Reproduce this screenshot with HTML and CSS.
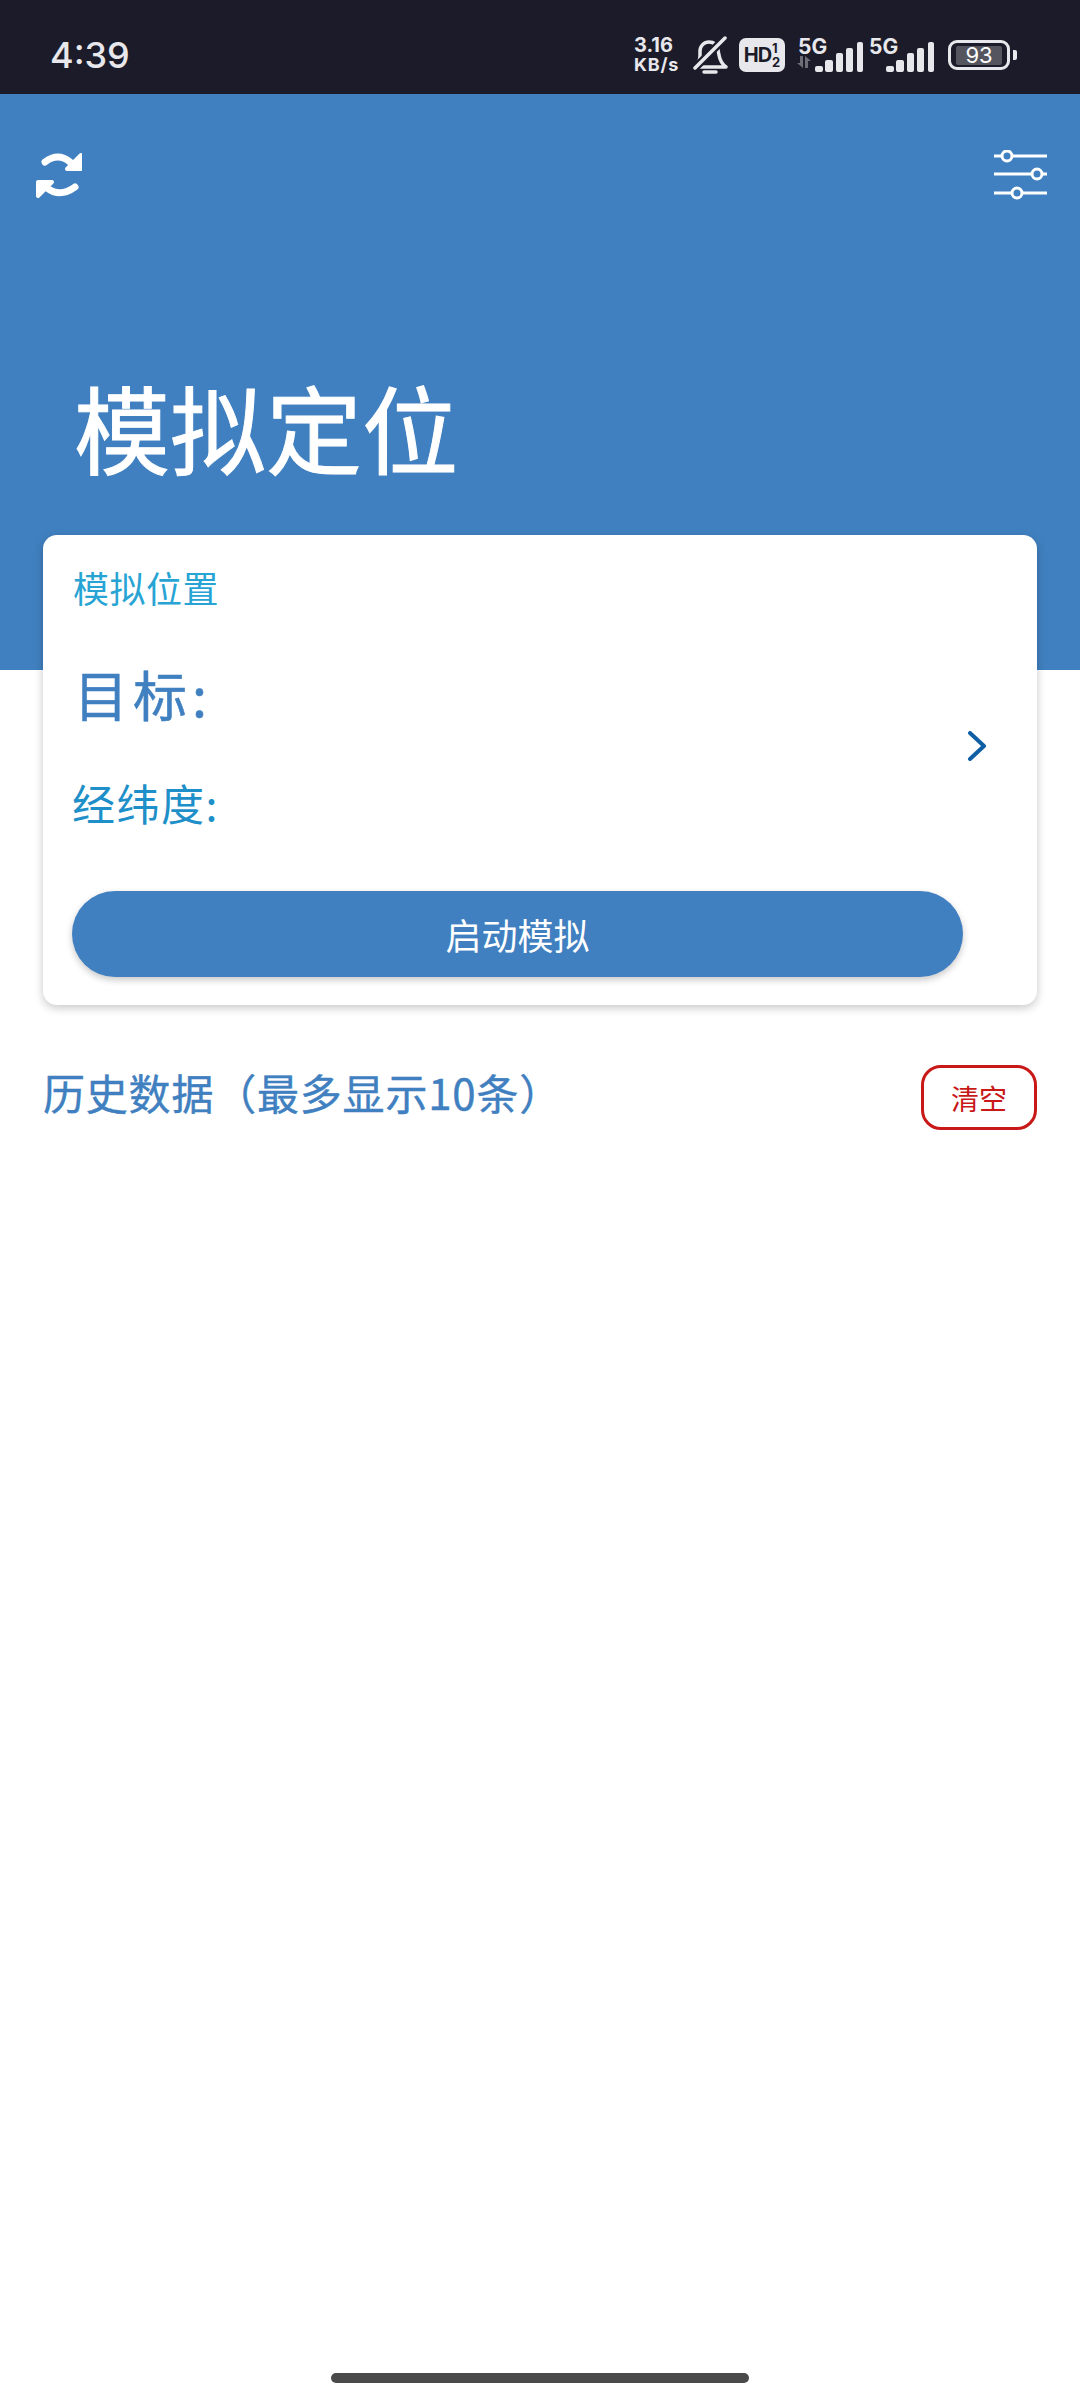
FILE: index.html
```html
<!DOCTYPE html>
<html lang="zh">
<head>
<meta charset="utf-8">
<title>模拟定位</title>
<link rel="stylesheet" href="styles.css">
</head>
<body>
<div class="statusbar">
  <span class="time">4:39</span>
  <div class="status-right">
    <span class="speed"><b>3.16</b><b>KB/s</b></span>
    <svg class="bell" width="36" height="38" viewBox="0 0 36 38" fill="none" stroke="#e8e8ec" stroke-width="3.5" stroke-linecap="round" stroke-linejoin="round">
      <path d="M2 31h32c-4-3-6-6-7-12l-1-5c-1-5-4-8-9-8s-9 4-9 9v5c0 4-2 8-6 11z"/>
      <path d="M33 2L3 32" stroke="#1b1b29" stroke-width="8"/>
      <path d="M33 2L3 32"/>
      <path d="M12 36h12"/>
    </svg>
    <span class="hd"><b class="hd-text">HD</b><span class="hd-sim"><b>1</b><b>2</b></span></span>
    <span class="net net-first">
      <b class="net-label">5G</b>
      <svg class="arrows" width="16" height="12" viewBox="0 0 16 12" fill="#6d6d76"><path d="M4 0h3v12L1 7h3zM9 0l6 5h-3v7H9z"/></svg>
      <svg class="bars" width="48" height="30" viewBox="0 0 48 30" fill="#e8e8ec"><rect x="0" y="24" width="8" height="6" rx="2"/><rect x="10" y="18" width="8" height="12" rx="2"/><rect x="21" y="11" width="7" height="19" rx="2"/><rect x="31" y="6" width="7" height="24" rx="2"/><rect x="42" y="0" width="6" height="30" rx="2"/></svg>
    </span>
    <span class="net">
      <b class="net-label">5G</b>
      <svg class="bars" width="48" height="30" viewBox="0 0 48 30" fill="#e8e8ec"><rect x="0" y="24" width="8" height="6" rx="2"/><rect x="10" y="18" width="8" height="12" rx="2"/><rect x="21" y="11" width="7" height="19" rx="2"/><rect x="31" y="6" width="7" height="24" rx="2"/><rect x="42" y="0" width="6" height="30" rx="2"/></svg>
    </span>
    <span class="battery"><span class="battery-fill">93</span></span>
    <span class="battery-tip"></span>
  </div>
</div>

<header class="top">
  <div class="top-icons">
    <svg width="46" height="50" viewBox="0 0 46 50" fill="none" stroke="#fff" stroke-linecap="round" stroke-linejoin="round">
      <path d="M9 12Q22 2 34 12" stroke-width="7"/>
      <path d="M45 5v14H31z" stroke-width="4" fill="#fff"/>
      <path d="M39 37Q24 48 11 38" stroke-width="7"/>
      <path d="M2 32v14l14-14z" stroke-width="4" fill="#fff"/>
    </svg>
    <svg width="56" height="50" viewBox="0 0 56 50" fill="none" stroke="#fff" stroke-width="3">
      <path d="M2 6h53M2 24h53M2 43h53"/>
      <circle cx="15" cy="6" r="5" fill="#4080c0"/>
      <circle cx="45" cy="24" r="5" fill="#4080c0"/>
      <circle cx="25" cy="43" r="5" fill="#4080c0"/>
    </svg>
  </div>
  <h1 class="page-title">模拟定位</h1>
</header>

<main class="content">
  <section class="card">
    <div class="card-label">模拟位置</div>
    <div class="target-row">
      <div class="target-info">
        <div class="target">目标:</div>
        <div class="coords">经纬度:</div>
      </div>
      <svg class="chevron" width="20" height="30" viewBox="0 0 20 30" fill="none" stroke="#0f5fa5" stroke-width="4" stroke-linecap="round" stroke-linejoin="round"><path d="M3 2l14 13L3 28"/></svg>
    </div>
    <button class="start">启动模拟</button>
  </section>

  <div class="history-head">
    <h2 class="history-title">历史数据（最多显示10条）</h2>
    <button class="clear">清空</button>
  </div>
</main>

<div class="homebar"></div>
</body>
</html>
```

FILE: styles.css
```css
* {
  box-sizing: border-box;
}
html, body {
  margin: 0;
  padding: 0;
}
body {
  width: 1080px;
  height: 2400px;
  background: #ffffff;
  font-family: "Noto Sans CJK SC", "Noto Sans", sans-serif;
  display: flex;
  flex-direction: column;
}
b {
  font-weight: 700;
}

.statusbar {
  height: 94px;
  flex: none;
  background: #1b1b29;
  color: #e8e8ec;
  display: flex;
  justify-content: space-between;
  align-items: center;
  padding: 0 63px 0 50px;
  font-family: Inter, "Liberation Sans", sans-serif;
}
.time {
  font-size: 36px;
  font-weight: 500;
  margin-top: 15px;
}
.status-right {
  display: flex;
  align-items: center;
  margin-top: 16px;
  height: 40px;
}
.speed {
  display: flex;
  flex-direction: column;
  width: 58px;
  font-size: 18px;
  letter-spacing: 0.8px;
  line-height: 20px;
}
.speed b:first-child {
  font-size: 20px;
  letter-spacing: 0;
}
.bell {
  display: block;
}
.hd {
  display: flex;
  align-items: center;
  justify-content: center;
  width: 46px;
  height: 34px;
  margin-left: 11px;
  background: #e8e8ec;
  border-radius: 7px;
  color: #1b1b29;
}
.hd-text {
  font-size: 20px;
  letter-spacing: -1px;
}
.hd-sim {
  display: flex;
  flex-direction: column;
  font-size: 13px;
  line-height: 14px;
  margin-left: 1px;
}
.net {
  display: grid;
  grid-template-columns: 17px 48px;
  grid-template-rows: 15px 15px;
  position: relative;
  width: 65px;
  height: 34px;
  margin-left: 6px;
}
.net-first {
  margin-left: 13px;
}
.net-label {
  grid-column: 1 / 3;
  grid-row: 1;
  font-size: 21px;
  line-height: 17px;
}
.arrows {
  grid-column: 1;
  grid-row: 2;
  align-self: end;
  margin-left: -2px;
}
.bars {
  position: absolute;
  left: 17px;
  bottom: 0;
}
.battery {
  display: flex;
  align-items: center;
  justify-content: center;
  width: 62px;
  height: 30px;
  margin-left: 14px;
  border: 3px solid #e8e8ec;
  border-radius: 9px;
}
.battery-fill {
  width: 46px;
  height: 19px;
  background: #55555f;
  border-radius: 2px;
  color: #fff;
  font-size: 22px;
  line-height: 19px;
  text-align: center;
}
.battery-tip {
  width: 4px;
  height: 10px;
  margin-left: 3px;
  background: #e8e8ec;
  border-radius: 0 2px 2px 0;
}

.top {
  height: 576px;
  flex: none;
  background: #4080c0;
  padding: 56px 32px 0 36px;
}
.top-icons {
  display: flex;
  justify-content: space-between;
  align-items: flex-start;
}
.page-title {
  margin: 166px 0 0 38px;
  color: #ffffff;
  font-size: 96px;
  font-weight: 400;
  -webkit-text-stroke: 1px #ffffff;
  line-height: 120px;
}

.content {
  flex: 1;
  padding: 0 43px;
}
.card {
  margin-top: -135px;
  position: relative;
  padding: 30px 0 28px 29px;
  background: #ffffff;
  border-radius: 14px;
  box-shadow: 0 3px 10px rgba(0, 0, 0, 0.22);
}
.card-label {
  margin-left: 1px;
  color: #28a4d4;
  font-size: 36px;
  letter-spacing: 0.5px;
  line-height: 44px;
}
.target-row {
  display: flex;
  justify-content: space-between;
  align-items: center;
  margin-top: 50px;
  padding-right: 50px;
}
.target {
  margin-left: 2px;
  color: #4080c0;
  font-size: 54px;
  -webkit-text-stroke: 0.5px #4080c0;
  letter-spacing: 5px;
  line-height: 70px;
}
.coords {
  margin-top: 46px;
  color: #1e8fc8;
  font-size: 43px;
  letter-spacing: 1.5px;
  line-height: 54px;
}
.chevron {
  margin-top: 4px;
}
.start {
  display: block;
  width: 891px;
  height: 86px;
  margin-top: 62px;
  border: none;
  border-radius: 43px;
  background: #4080c0;
  color: #ffffff;
  font-family: inherit;
  font-size: 36px;
  box-shadow: 0 3px 7px rgba(0, 0, 0, 0.22);
}

.history-head {
  display: flex;
  justify-content: space-between;
  align-items: flex-start;
  margin-top: 60px;
}
.history-title {
  margin: 0;
  color: #4080c0;
  font-size: 42px;
  font-weight: 400;
  -webkit-text-stroke: 0.4px #4080c0;
  letter-spacing: 0.8px;
  line-height: 54px;
}
.clear {
  width: 116px;
  height: 65px;
  padding: 0;
  background: #ffffff;
  border: 3px solid #c81818;
  border-radius: 20px;
  color: #c81818;
  font-family: inherit;
  font-size: 28px;
}

.homebar {
  flex: none;
  width: 418px;
  height: 10px;
  margin: 0 auto 17px;
  background: #4a4a4a;
  border-radius: 5px;
}
```
